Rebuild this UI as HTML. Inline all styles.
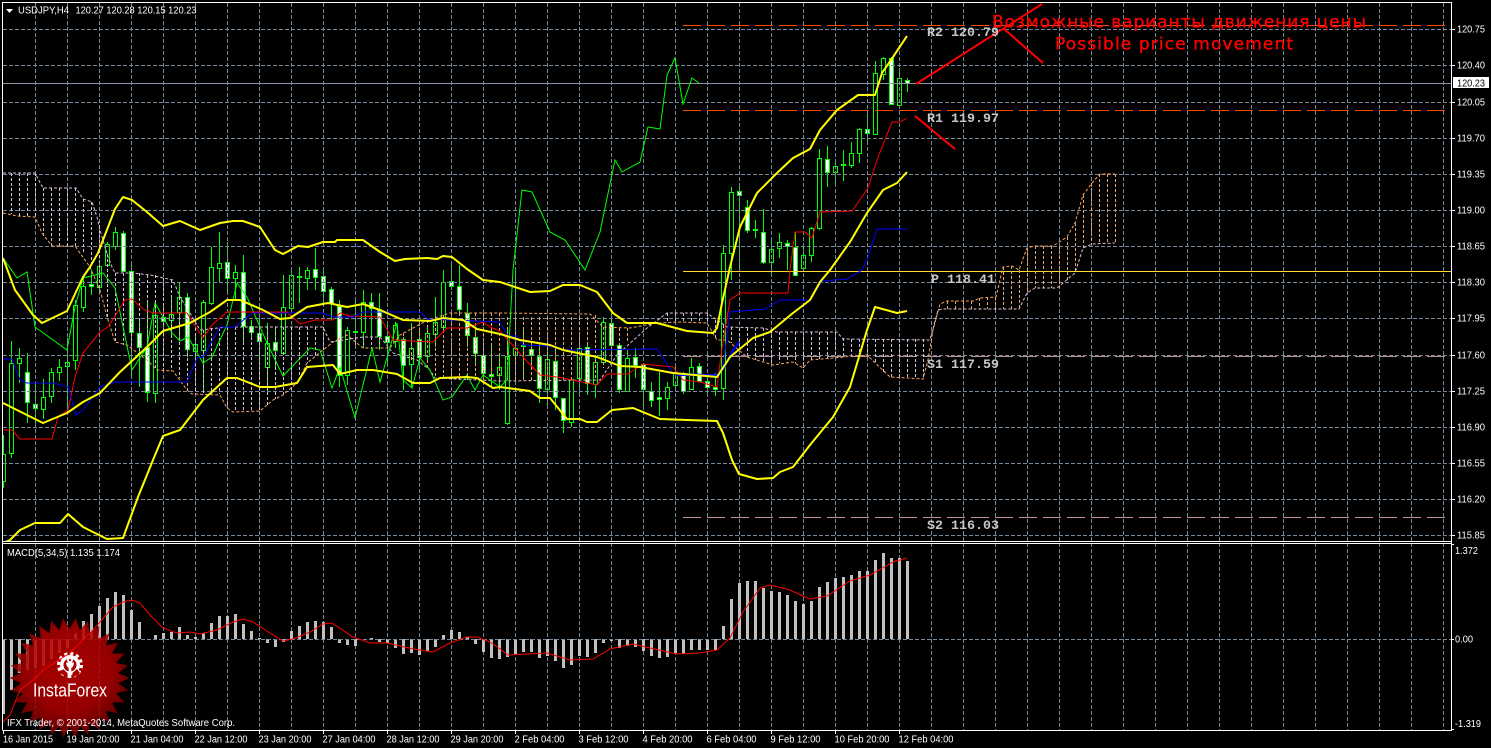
<!DOCTYPE html>
<html><head><meta charset="utf-8"><title>USDJPY,H4</title>
<style>html,body{margin:0;padding:0;background:#000;overflow:hidden}svg{display:block}
.ax{font:10.5px "Liberation Sans",sans-serif;fill:#fff}
.lv{font:bold 13.33px "Liberation Mono",monospace;fill:#c8c8c8}
.big{font:17px "DejaVu Sans",sans-serif;fill:#f00;stroke:#f00;stroke-width:.35}</style></head>
<body>
<svg width="1491" height="748" viewBox="0 0 1491 748" xmlns="http://www.w3.org/2000/svg">
<defs>
<clipPath id="m"><rect x="3" y="3" width="1448" height="538"/></clipPath>
<radialGradient id="lg" cx="50%" cy="42%" r="58%"><stop offset="0" stop-color="#c40000"/><stop offset=".6" stop-color="#ae0000"/><stop offset="1" stop-color="#6e0000"/></radialGradient>
</defs>
<rect width="1491" height="748" fill="#000"/>
<g clip-path="url(#m)">
<!-- wicks -->
<path fill="none" stroke="#0f0" stroke-width="1" shape-rendering="crispEdges" d="M3.5 435V488M11.5 341V458M19.5 348V383M27.5 353V423M35.5 383V428M43.5 379V419M51.5 368V403M59.5 359V381M67.5 338V410M75.5 300V370M83.5 275V312M91.5 270V295M99.5 262V293M107.5 242V267M115.5 227V250M123.5 231V272M131.5 261V377M139.5 320V387M147.5 300V402M155.5 302V403M163.5 303V333M171.5 297V337M179.5 282V337M187.5 293V357M195.5 337V363M203.5 300V392M211.5 247V305M219.5 232V282M227.5 242V293M235.5 265V300M243.5 255V342M251.5 320V340M259.5 303V363M267.5 323V395M275.5 330V370M283.5 275V354M291.5 267V312M299.5 267V303M307.5 267V290M315.5 248V290M323.5 270V303M331.5 287V320M339.5 300V387M347.5 327V385M355.5 297V347M363.5 290V347M371.5 293V340M379.5 293V350M387.5 322V367M395.5 322V348M403.5 337V390M411.5 323V388M419.5 330V370M427.5 325V360M435.5 297V347M443.5 270V333M451.5 265V290M459.5 265V313M467.5 303V347M475.5 327V363M483.5 340V380M491.5 343V387M499.5 353V390M507.5 330V425M515.5 270V370M523.5 330V380M531.5 343V370M539.5 343V403M547.5 348V407M555.5 350V410M563.5 398V433M571.5 377V427M579.5 340V395M587.5 345V395M595.5 358V398M603.5 317V363M611.5 313V358M619.5 344V393M627.5 350V392M635.5 348V378M643.5 363V410M651.5 382V407M659.5 372V416M667.5 382V410M675.5 367V392M683.5 372V394M691.5 358V390M699.5 363V382M707.5 377V394M715.5 373V396M723.5 245V400M731.5 187V280M739.5 186V270M747.5 200V233M755.5 220V238M763.5 209V264M771.5 240V275M779.5 233V258M787.5 240V270M795.5 232V275M803.5 245V272M811.5 227V262M819.5 149V230M827.5 146V187M835.5 163V185M843.5 150V181M851.5 142V168M859.5 128V163M867.5 112V143M875.5 61V135M883.5 57V80M891.5 57V105M899.5 68V106M907.5 78V92"/>
<!-- hollow bodies -->
<path fill="#000" stroke="#0f0" stroke-width="1" shape-rendering="crispEdges" d="M1.5 454.5h4v27h-4zM9.5 363.5h4v90h-4zM17.5 358.5h4v5h-4zM41.5 397.5h4v12h-4zM49.5 372.5h4v24h-4zM57.5 367.5h4v5h-4zM65.5 362.5h4v4h-4zM73.5 305.5h4v55h-4zM81.5 286.5h4v21h-4zM97.5 266.5h4v21h-4zM105.5 244.5h4v21h-4zM113.5 232.5h4v14h-4zM153.5 315.5h4v78h-4zM169.5 314.5h4v6h-4zM177.5 297.5h4v15h-4zM193.5 344.5h4v7h-4zM201.5 302.5h4v48h-4zM209.5 267.5h4v36h-4zM217.5 263.5h4v5h-4zM233.5 272.5h4v6h-4zM265.5 343.5h4v24h-4zM281.5 307.5h4v46h-4zM289.5 275.5h4v33h-4zM297.5 276.5h4v1h-4zM305.5 270.5h4v8h-4zM345.5 330.5h4v45h-4zM353.5 331.5h4v1h-4zM361.5 302.5h4v30h-4zM393.5 325.5h4v16h-4zM409.5 348.5h4v16h-4zM425.5 333.5h4v23h-4zM433.5 322.5h4v12h-4zM441.5 282.5h4v45h-4zM497.5 367.5h4v8h-4zM505.5 356.5h4v67h-4zM513.5 348.5h4v7h-4zM521.5 345.5h4v1h-4zM545.5 359.5h4v30h-4zM569.5 379.5h4v43h-4zM577.5 348.5h4v30h-4zM593.5 362.5h4v22h-4zM601.5 322.5h4v40h-4zM625.5 358.5h4v33h-4zM665.5 387.5h4v11h-4zM673.5 373.5h4v12h-4zM689.5 367.5h4v22h-4zM721.5 253.5h4v135h-4zM729.5 192.5h4v61h-4zM769.5 249.5h4v13h-4zM777.5 242.5h4v6h-4zM801.5 255.5h4v13h-4zM809.5 228.5h4v27h-4zM817.5 158.5h4v70h-4zM833.5 166.5h4v6h-4zM849.5 153.5h4v12h-4zM857.5 129.5h4v24h-4zM873.5 73.5h4v61h-4zM881.5 58.5h4v16h-4zM897.5 78.5h4v27h-4z"/>
<!-- white bodies -->
<path fill="#fff" stroke="#0f0" stroke-width="1" shape-rendering="crispEdges" d="M25.5 372.5h4v30h-4zM33.5 404.5h4v4h-4zM89.5 284.5h4v2h-4zM121.5 233.5h4v38h-4zM129.5 271.5h4v61h-4zM137.5 333.5h4v14h-4zM145.5 347.5h4v45h-4zM161.5 317.5h4v4h-4zM185.5 297.5h4v52h-4zM225.5 262.5h4v16h-4zM241.5 272.5h4v54h-4zM249.5 326.5h4v6h-4zM257.5 333.5h4v8h-4zM273.5 342.5h4v8h-4zM313.5 269.5h4v8h-4zM321.5 276.5h4v15h-4zM329.5 289.5h4v14h-4zM337.5 306.5h4v69h-4zM369.5 302.5h4v6h-4zM377.5 309.5h4v27h-4zM385.5 336.5h4v6h-4zM401.5 339.5h4v26h-4zM417.5 339.5h4v18h-4zM449.5 281.5h4v5h-4zM457.5 286.5h4v23h-4zM465.5 313.5h4v22h-4zM473.5 337.5h4v16h-4zM481.5 355.5h4v18h-4zM489.5 374.5h4v2h-4zM529.5 349.5h4v6h-4zM537.5 356.5h4v32h-4zM553.5 361.5h4v36h-4zM561.5 398.5h4v22h-4zM585.5 347.5h4v36h-4zM609.5 323.5h4v22h-4zM617.5 345.5h4v44h-4zM633.5 357.5h4v8h-4zM641.5 364.5h4v25h-4zM649.5 391.5h4v9h-4zM657.5 397.5h4v2h-4zM681.5 373.5h4v18h-4zM697.5 366.5h4v15h-4zM705.5 381.5h4v6h-4zM713.5 387.5h4v2h-4zM737.5 191.5h4v4h-4zM745.5 207.5h4v23h-4zM753.5 229.5h4v1h-4zM761.5 232.5h4v30h-4zM785.5 243.5h4v3h-4zM793.5 247.5h4v28h-4zM825.5 159.5h4v13h-4zM841.5 164.5h4v1h-4zM865.5 129.5h4v4h-4zM889.5 58.5h4v46h-4zM905.5 80.5h4v3h-4z"/>
</g>
<!-- grid -->
<g fill="none" stroke="#778899" stroke-width="1" stroke-dasharray="4 2" shape-rendering="crispEdges">
<path d="M3 29.5H1451M3 65.5H1451M3 102.5H1451M3 138.5H1451M3 174.5H1451M3 210.5H1451M3 246.5H1451M3 282.5H1451M3 318.5H1451M3 355.5H1451M3 391.5H1451M3 427.5H1451M3 463.5H1451M3 499.5H1451M3 535.5H1451"/>
<path d="M35.5 3V730M67.5 3V730M99.5 3V730M131.5 3V730M163.5 3V730M195.5 3V730M227.5 3V730M259.5 3V730M291.5 3V730M323.5 3V730M355.5 3V730M387.5 3V730M419.5 3V730M451.5 3V730M483.5 3V730M515.5 3V730M547.5 3V730M579.5 3V730M611.5 3V730M643.5 3V730M675.5 3V730M707.5 3V730M739.5 3V730M771.5 3V730M803.5 3V730M835.5 3V730M867.5 3V730M899.5 3V730M931.5 3V730M963.5 3V730M995.5 3V730M1027.5 3V730M1059.5 3V730M1091.5 3V730M1123.5 3V730M1155.5 3V730M1187.5 3V730M1219.5 3V730M1251.5 3V730M1283.5 3V730M1315.5 3V730M1347.5 3V730M1379.5 3V730M1411.5 3V730M1443.5 3V730"/>
</g>
<!-- MACD bars -->
<path fill="none" stroke="#c0c0c0" stroke-width="3" shape-rendering="crispEdges" d="M3.5 639V714M11.5 639V690M19.5 639V673M27.5 639V670M35.5 639V668M43.5 639V666M51.5 639V659M59.5 639V653M67.5 639V648M75.5 639V633M83.5 639V621M91.5 639V614M99.5 639V606M107.5 639V598M115.5 639V592M123.5 639V595M131.5 639V610M139.5 639V622M155.5 639V635M163.5 639V633M171.5 639V632M179.5 639V627M187.5 639V635M195.5 639V637M203.5 639V633M211.5 639V623M219.5 639V616M227.5 639V616M235.5 639V614M243.5 639V624M251.5 639V631M259.5 639V638M267.5 639V643M275.5 639V647M283.5 639V642M291.5 639V631M299.5 639V626M307.5 639V622M315.5 639V621M323.5 639V622M331.5 639V627M339.5 639V643M347.5 639V645M355.5 639V646M371.5 639V638M379.5 639V642M387.5 639V643M395.5 639V648M403.5 639V654M411.5 639V653M419.5 639V655M427.5 639V651M435.5 639V647M443.5 639V635M451.5 639V630M459.5 639V632M467.5 639V637M475.5 639V644M483.5 639V652M491.5 639V658M499.5 639V659M507.5 639V657M515.5 639V654M523.5 639V652M531.5 639V652M539.5 639V658M547.5 639V656M555.5 639V661M563.5 639V668M571.5 639V665M579.5 639V656M587.5 639V657M595.5 639V653M603.5 639V643M611.5 639V641M619.5 639V648M627.5 639V646M635.5 639V647M643.5 639V651M651.5 639V656M659.5 639V658M667.5 639V657M675.5 639V653M683.5 639V654M691.5 639V650M699.5 639V650M707.5 639V650M715.5 639V650M723.5 639V626M731.5 639V599M739.5 639V583M747.5 639V581M755.5 639V581M763.5 639V588M771.5 639V591M779.5 639V592M787.5 639V595M795.5 639V601M803.5 639V604M811.5 639V601M819.5 639V587M827.5 639V582M835.5 639V578M843.5 639V577M851.5 639V575M859.5 639V571M867.5 639V571M875.5 639V560M883.5 639V553M891.5 639V558M899.5 639V558M907.5 639V561"/>
<path fill="none" stroke="#778899" stroke-dasharray="4 2" shape-rendering="crispEdges" d="M3 639.5H1451"/>
<!-- frame -->
<path fill="none" stroke="#fff" stroke-width="1" shape-rendering="crispEdges" d="M2.5 730V2.5H1451.5V730.5H2.5M3 541.5H1451M3 543.5H1451"/>
<!-- logo -->
<g transform="translate(69.5 678)">
<polygon opacity=".86" fill="url(#lg)" points="60,0 48.7,5.1 58.7,12.5 46.6,15.1 54.8,24.4 42.4,24.5 48.5,35.3 36.4,32.8 40.1,44.6 28.8,39.6 30,52 19.9,44.8 18.5,57.1 10.2,47.9 6.3,59.7 0,49 -6.3,59.7 -10.2,47.9 -18.5,57.1 -19.9,44.8 -30,52 -28.8,39.6 -40.1,44.6 -36.4,32.8 -48.5,35.3 -42.4,24.5 -54.8,24.4 -46.6,15.1 -58.7,12.5 -48.7,5.1 -60,0 -48.7,-5.1 -58.7,-12.5 -46.6,-15.1 -54.8,-24.4 -42.4,-24.5 -48.5,-35.3 -36.4,-32.8 -40.1,-44.6 -28.8,-39.6 -30,-52 -19.9,-44.8 -18.5,-57.1 -10.2,-47.9 -6.3,-59.7 0,-49 6.3,-59.7 10.2,-47.9 18.5,-57.1 19.9,-44.8 30,-52 28.8,-39.6 40.1,-44.6 36.4,-32.8 48.5,-35.3 42.4,-24.5 54.8,-24.4 46.6,-15.1 58.7,-12.5 48.7,-5.1"/>
<g transform="translate(.5 -13)">
<circle r="10" fill="#fff"/>
<circle r="11.5" fill="none" stroke="#fff" stroke-width="3" stroke-dasharray="3.2 2.8"/>
<circle r="6.5" fill="#a80000"/>
<path d="M-4 -2.5Q-3.5 2 -1.3 3V13H1.3V3Q3.5 2 4 -2.5" fill="#fff"/>
<path d="M-2.4 13L-10 8 -7 4 -2.4 8zM2.4 13L10 8 7 4 2.4 8z" fill="#a80000"/>
<circle cy="-5" r="3" fill="#fff"/>
<circle cy="-5" r="1.1" fill="#a80000"/>
</g>
<text x="-36.5" y="18.5" font-family="Liberation Sans, sans-serif" font-size="18" fill="#fff" textLength="74" lengthAdjust="spacingAndGlyphs">InstaForex</text>
</g>
<!-- MACD signal -->
<polyline fill="none" stroke="#f00" stroke-width="1" points="3,722 10,715 20,690 33,680 43,670 70,653 93,630 113,607 123,602 132,600 140,603 150,615 163,628 177,633 190,632 200,634 217,630 233,622 243,619 253,622 270,633 283,641 293,639 310,632 323,624 332,623 353,637 370,643 387,643 413,649 433,652 450,643 467,637 477,637 490,642 500,649 508,655 527,654 547,653 570,660 593,659 610,649 633,644 650,648 677,654 700,653 717,650 730,638 743,612 760,588 770,585 787,589 810,599 827,596 850,581 870,575 893,562 907,558"/>
<g clip-path="url(#m)">
<!-- level lines -->
<g fill="none" stroke-width="1" stroke-dasharray="18 6" shape-rendering="crispEdges">
<path stroke="#ff4500" d="M683 25.5H1445M683 110.5H1445"/>
<path stroke="#bc8f8f" d="M683 356.5H1445M683 517.5H1445"/>
</g>
<path stroke="#8a93a3" shape-rendering="crispEdges" d="M3 83.5H1451"/>
<path stroke="#ffd830" shape-rendering="crispEdges" d="M683 271.5H1451"/>
<!-- kumo -->
<g fill="none" stroke-width="1" stroke-dasharray="3 2">
<path stroke="#d8bfd8" shape-rendering="crispEdges" d="M11.5 173V214M19.5 173V216M27.5 173V216M35.5 173V217M43.5 188V236M51.5 188V246M59.5 188V246M67.5 188V246M75.5 188V246M83.5 199V254M91.5 202V267M99.5 225V288M107.5 254V318M115.5 273V342M123.5 273V345M131.5 273V350M139.5 273V355M147.5 275V360M155.5 275V368M163.5 278V371M171.5 280V371M179.5 297V378M187.5 313V390M195.5 328V394M203.5 330V394M211.5 328V394M219.5 328V394M227.5 327V408M235.5 327V412M243.5 327V412M251.5 327V412M259.5 327V412M267.5 327V406M275.5 327V399M283.5 327V395M291.5 327V390M299.5 327V381M307.5 327V363M315.5 327V355M323.5 327V350M339.5 337V340M355.5 337V345M363.5 337V348M371.5 337V348M379.5 337V348M667.5 313V323M675.5 313V323M683.5 313V323M691.5 313V323M699.5 313V323M707.5 313V323M715.5 320V338M723.5 325V340M731.5 327V343M739.5 328V350M747.5 328V357M755.5 328V360M763.5 328V363M771.5 330V365M779.5 332V363M787.5 332V363M795.5 332V363M803.5 332V368M811.5 332V360M819.5 332V359M827.5 332V358M835.5 332V357M843.5 338V357M851.5 339V355M859.5 339V355M867.5 339V355M875.5 339V362M883.5 339V372M891.5 339V377M899.5 339V379M907.5 339V379M915.5 339V379M923.5 339V379"/>
<path stroke="#f4a460" shape-rendering="crispEdges" d="M403.5 333V358M411.5 327V360M419.5 323V362M427.5 320V368M435.5 318V378M443.5 315V380M451.5 313V380M459.5 313V380M467.5 313V380M475.5 313V380M483.5 313V380M491.5 313V380M499.5 313V380M507.5 317V380M515.5 317V380M523.5 317V380M531.5 317V380M539.5 317V380M547.5 317V380M555.5 317V380M563.5 317V380M571.5 317V380M579.5 317V380M587.5 317V380M595.5 315V380M603.5 327V368M611.5 327V358M619.5 328V350M627.5 328V342M947.5 301V309M955.5 301V309M963.5 301V309M971.5 301V309M979.5 298V309M987.5 297V309M995.5 297V309M1003.5 267V309M1011.5 266V309M1019.5 270V309M1027.5 248V293M1035.5 246V288M1043.5 246V288M1051.5 246V288M1059.5 246V288M1067.5 237V283M1075.5 223V273M1083.5 195V248M1091.5 183V244M1099.5 174V243M1107.5 174V243M1115.5 174V243"/>
<polyline stroke="#f4a460" points="3,213 17,216 35,217 42,233 52,246 75,246 90,267 100,290 108,320 115,342 127,345 147,360 157,370 173,371 187,390 192,394 220,395 227,408 233,412 260,411 273,400 283,395 298,382 307,363 317,355 333,342 347,335 363,348 390,348 400,335 428,320 450,313 500,313 590,314 603,327 630,328 657,323 680,322 707,323 717,340 727,340 747,357 773,365 793,362 803,368 810,360 867,355 890,377 923,379 928,360 933,330 940,304 947,301 973,301 980,298 996,297 1003,267 1012,266 1019,270 1027,248 1035,246 1053,246 1067,237 1075,223 1083,195 1092,183 1100,174 1115,174"/>
<polyline stroke="#d8bfd8" points="3,173 35,173 43,188 76,188 83,199 92,202 97,217 100,230 108,257 112,267 115,273 133,273 150,275 173,280 180,297 190,313 200,330 227,327 323,327 330,342 363,337 380,337 393,353 417,360 430,370 435,378 500,381 600,380 617,355 647,328 667,313 707,313 727,327 763,328 777,332 837,332 843,339 930,340 938,310 943,309 1019,309 1027,293 1035,288 1057,288 1075,273 1083,248 1092,244 1115,243"/>
</g>
<!-- chikou -->
<polyline fill="none" stroke="#0f0" stroke-width="1" points="3,258 8,265 17,278 27,272 35,327 67,350 75,307 83,278 103,273 115,288 132,370 147,347 155,303 172,333 180,341 188,337 203,363 212,357 227,325 237,283 247,297 267,343 283,376 310,348 320,350 332,388 340,367 355,418 372,348 380,382 397,323 403,380 412,388 420,358 430,370 443,400 452,397 467,375 475,390 483,375 500,387 507,380 513,270 522,190 532,192 550,232 565,240 585,270 600,232 615,160 622,172 640,162 648,127 660,129 667,75 675,58 683,104 692,78 699,83"/>
<!-- kijun red -->
<polyline fill="none" stroke="#f00" stroke-width="1" points="3,430 12,430 20,439 52,439 58,417 68,410 75,377 83,353 100,332 108,327 125,300 132,299 143,309 153,313 187,313 203,338 212,325 227,312 287,312 300,324 315,320 333,320 340,313 350,316 380,317 393,340 433,342 447,328 467,328 483,322 490,327 500,331 523,357 540,375 557,377 597,385 607,374 628,374 643,364 673,367 683,380 700,382 717,387 722,348 730,300 740,293 788,293 790,270 795,232 805,232 812,238 820,212 852,211 868,188 877,160 892,122 900,122 907,118"/>
<!-- tenkan blue -->
<polyline fill="none" stroke="#00f" stroke-width="1" points="3,359 12,359 20,380 27,383 53,383 68,387 76,415 83,410 100,387 115,382 187,382 197,358 203,357 220,327 235,327 252,313 323,313 333,317 353,317 363,312 420,312 428,319 500,322 508,336 517,336 523,345 550,346 563,350 657,349 673,373 717,375 723,367 730,312 765,309 780,300 810,300 822,281 847,279 862,270 868,257 877,229 907,229"/>
<polyline fill="none" stroke="#00f" stroke-width="2" points="677,375 717,375 724,368 732,352 739,342"/>
<!-- bands -->
<g fill="none" stroke="#ff0" stroke-width="2" stroke-linejoin="round">
<polyline points="3,258 15,290 33,315 42,323 67,311 83,277 90,267 98,253 115,209 123,197 132,200 147,212 163,226 180,221 200,230 220,223 233,221 243,221 260,227 275,250 283,254 298,246 308,247 323,242 335,242 337,240 363,240 380,252 395,261 405,259 427,258 437,259 443,256 452,257 467,269 483,280 500,282 530,292 550,291 563,285 580,285 597,292 613,313 627,323 657,323 687,331 713,333 717,328 722,303 730,267 740,227 757,193 777,173 793,158 810,149 820,130 837,110 858,95 875,95 882,73 893,57 907,36"/>
<polyline points="3,403 43,423 67,413 83,402 100,393 120,372 147,347 163,331 190,323 210,312 227,300 240,300 263,310 280,319 290,318 307,307 328,303 347,307 363,304 380,310 403,320 430,321 443,318 463,320 477,329 500,334 520,340 550,345 563,350 597,357 620,366 640,367 673,373 717,377 730,357 753,338 770,332 793,313 810,300 820,282 830,270 850,242 867,213 883,190 897,183 907,172"/>
<polyline points="3,543 10,540 20,530 35,523 60,523 68,514 83,527 107,539 123,538 138,497 153,460 163,436 180,430 203,400 227,378 237,378 260,387 275,387 297,383 307,367 333,365 340,374 357,370 373,370 397,374 413,383 430,383 440,378 467,377 477,378 493,388 500,387 530,391 540,398 550,398 567,419 580,419 587,422 597,422 612,410 633,408 660,419 687,420 717,421 723,433 732,460 739,474 757,479 773,478 780,472 793,467 810,445 833,417 850,387 867,330 875,307 897,313 907,311"/>
</g>
<!-- red arrows -->
<g fill="none" stroke="#f00" stroke-width="2">
<path d="M916 84L1042 4M1003 28L1043 63M915 116L955 149"/>
</g>
</g>
<!-- level labels -->
<text class="lv" x="927" y="36">R2 120.79</text>
<text class="lv" x="927" y="122">R1 119.97</text>
<text class="lv" x="931" y="283">P 118.41</text>
<text class="lv" x="927" y="368">S1 117.59</text>
<text class="lv" x="927" y="529">S2 116.03</text>
<text class="big" x="992" y="27.5" textLength="374">Возможные варианты движения цены</text>
<text class="big" x="1055" y="49.5" textLength="238">Possible price movement</text>
<!-- header -->
<polygon points="6,9 13,9 9.5,13" fill="#fff"/>
<text class="ax" x="18" y="13.5" textLength="51" lengthAdjust="spacingAndGlyphs">USDJPY,H4</text>
<text class="ax" x="75.5" y="13.5" textLength="121" lengthAdjust="spacingAndGlyphs">120.27 120.28 120.15 120.23</text>
<text class="ax" x="7" y="556" textLength="113" lengthAdjust="spacingAndGlyphs">MACD(5,34,5) 1.135 1.174</text>
<text class="ax" x="7" y="726" textLength="228" lengthAdjust="spacingAndGlyphs">IFX Trader, © 2001-2014, MetaQuotes Software Corp.</text>
<!-- right axis -->
<path stroke="#fff" fill="none" shape-rendering="crispEdges" d="M1452 29.5h3M1452 65.5h3M1452 102.5h3M1452 138.5h3M1452 174.5h3M1452 210.5h3M1452 246.5h3M1452 282.5h3M1452 318.5h3M1452 355.5h3M1452 391.5h3M1452 427.5h3M1452 463.5h3M1452 499.5h3M1452 535.5h3M1452 544.5h2M1452 639.5h2M1452 729.5h2"/>
<g>
<text class="ax" x="1457" y="32.5" textLength="28" lengthAdjust="spacingAndGlyphs">120.75</text>
<text class="ax" x="1457" y="68.5" textLength="28" lengthAdjust="spacingAndGlyphs">120.40</text>
<text class="ax" x="1457" y="105.5" textLength="28" lengthAdjust="spacingAndGlyphs">120.05</text>
<text class="ax" x="1457" y="141.5" textLength="28" lengthAdjust="spacingAndGlyphs">119.70</text>
<text class="ax" x="1457" y="177.5" textLength="28" lengthAdjust="spacingAndGlyphs">119.35</text>
<text class="ax" x="1457" y="213.5" textLength="28" lengthAdjust="spacingAndGlyphs">119.00</text>
<text class="ax" x="1457" y="249.5" textLength="28" lengthAdjust="spacingAndGlyphs">118.65</text>
<text class="ax" x="1457" y="285.5" textLength="28" lengthAdjust="spacingAndGlyphs">118.30</text>
<text class="ax" x="1457" y="321.5" textLength="28" lengthAdjust="spacingAndGlyphs">117.95</text>
<text class="ax" x="1457" y="358.5" textLength="28" lengthAdjust="spacingAndGlyphs">117.60</text>
<text class="ax" x="1457" y="394.5" textLength="28" lengthAdjust="spacingAndGlyphs">117.25</text>
<text class="ax" x="1457" y="430.5" textLength="28" lengthAdjust="spacingAndGlyphs">116.90</text>
<text class="ax" x="1457" y="466.5" textLength="28" lengthAdjust="spacingAndGlyphs">116.55</text>
<text class="ax" x="1457" y="502.5" textLength="28" lengthAdjust="spacingAndGlyphs">116.20</text>
<text class="ax" x="1457" y="538.5" textLength="28" lengthAdjust="spacingAndGlyphs">115.85</text>
<text class="ax" x="1455" y="554" textLength="23" lengthAdjust="spacingAndGlyphs">1.372</text>
<text class="ax" x="1455" y="642.5" textLength="18" lengthAdjust="spacingAndGlyphs">0.00</text>
<text class="ax" x="1455" y="727" textLength="26" lengthAdjust="spacingAndGlyphs">-1.319</text>
</g>
<rect x="1453" y="77" width="36" height="11" fill="#fff"/>
<text x="1457" y="86.5" font-family="Liberation Sans, sans-serif" font-size="10.5" fill="#000" textLength="28" lengthAdjust="spacingAndGlyphs">120.23</text>
<!-- bottom axis -->
<path stroke="#fff" fill="none" shape-rendering="crispEdges" d="M3.5 731v3M67.5 731v3M131.5 731v3M195.5 731v3M259.5 731v3M323.5 731v3M387.5 731v3M451.5 731v3M515.5 731v3M579.5 731v3M643.5 731v3M707.5 731v3M771.5 731v3M835.5 731v3M899.5 731v3"/>
<text class="ax" x="3" y="742.5" textLength="50" lengthAdjust="spacingAndGlyphs">16 Jan 2015</text>
<text class="ax" x="66.5" y="742.5" textLength="53" lengthAdjust="spacingAndGlyphs">19 Jan 20:00</text>
<text class="ax" x="130.5" y="742.5" textLength="53" lengthAdjust="spacingAndGlyphs">21 Jan 04:00</text>
<text class="ax" x="194.5" y="742.5" textLength="53" lengthAdjust="spacingAndGlyphs">22 Jan 12:00</text>
<text class="ax" x="258.5" y="742.5" textLength="53" lengthAdjust="spacingAndGlyphs">23 Jan 20:00</text>
<text class="ax" x="322.5" y="742.5" textLength="53" lengthAdjust="spacingAndGlyphs">27 Jan 04:00</text>
<text class="ax" x="386.5" y="742.5" textLength="53" lengthAdjust="spacingAndGlyphs">28 Jan 12:00</text>
<text class="ax" x="450.5" y="742.5" textLength="53" lengthAdjust="spacingAndGlyphs">29 Jan 20:00</text>
<text class="ax" x="514.5" y="742.5" textLength="50" lengthAdjust="spacingAndGlyphs">2 Feb 04:00</text>
<text class="ax" x="578.5" y="742.5" textLength="50" lengthAdjust="spacingAndGlyphs">3 Feb 12:00</text>
<text class="ax" x="642.5" y="742.5" textLength="50" lengthAdjust="spacingAndGlyphs">4 Feb 20:00</text>
<text class="ax" x="706.5" y="742.5" textLength="50" lengthAdjust="spacingAndGlyphs">6 Feb 04:00</text>
<text class="ax" x="770.5" y="742.5" textLength="50" lengthAdjust="spacingAndGlyphs">9 Feb 12:00</text>
<text class="ax" x="834.5" y="742.5" textLength="55" lengthAdjust="spacingAndGlyphs">10 Feb 20:00</text>
<text class="ax" x="898.5" y="742.5" textLength="55" lengthAdjust="spacingAndGlyphs">12 Feb 04:00</text>
</svg>
</body></html>
